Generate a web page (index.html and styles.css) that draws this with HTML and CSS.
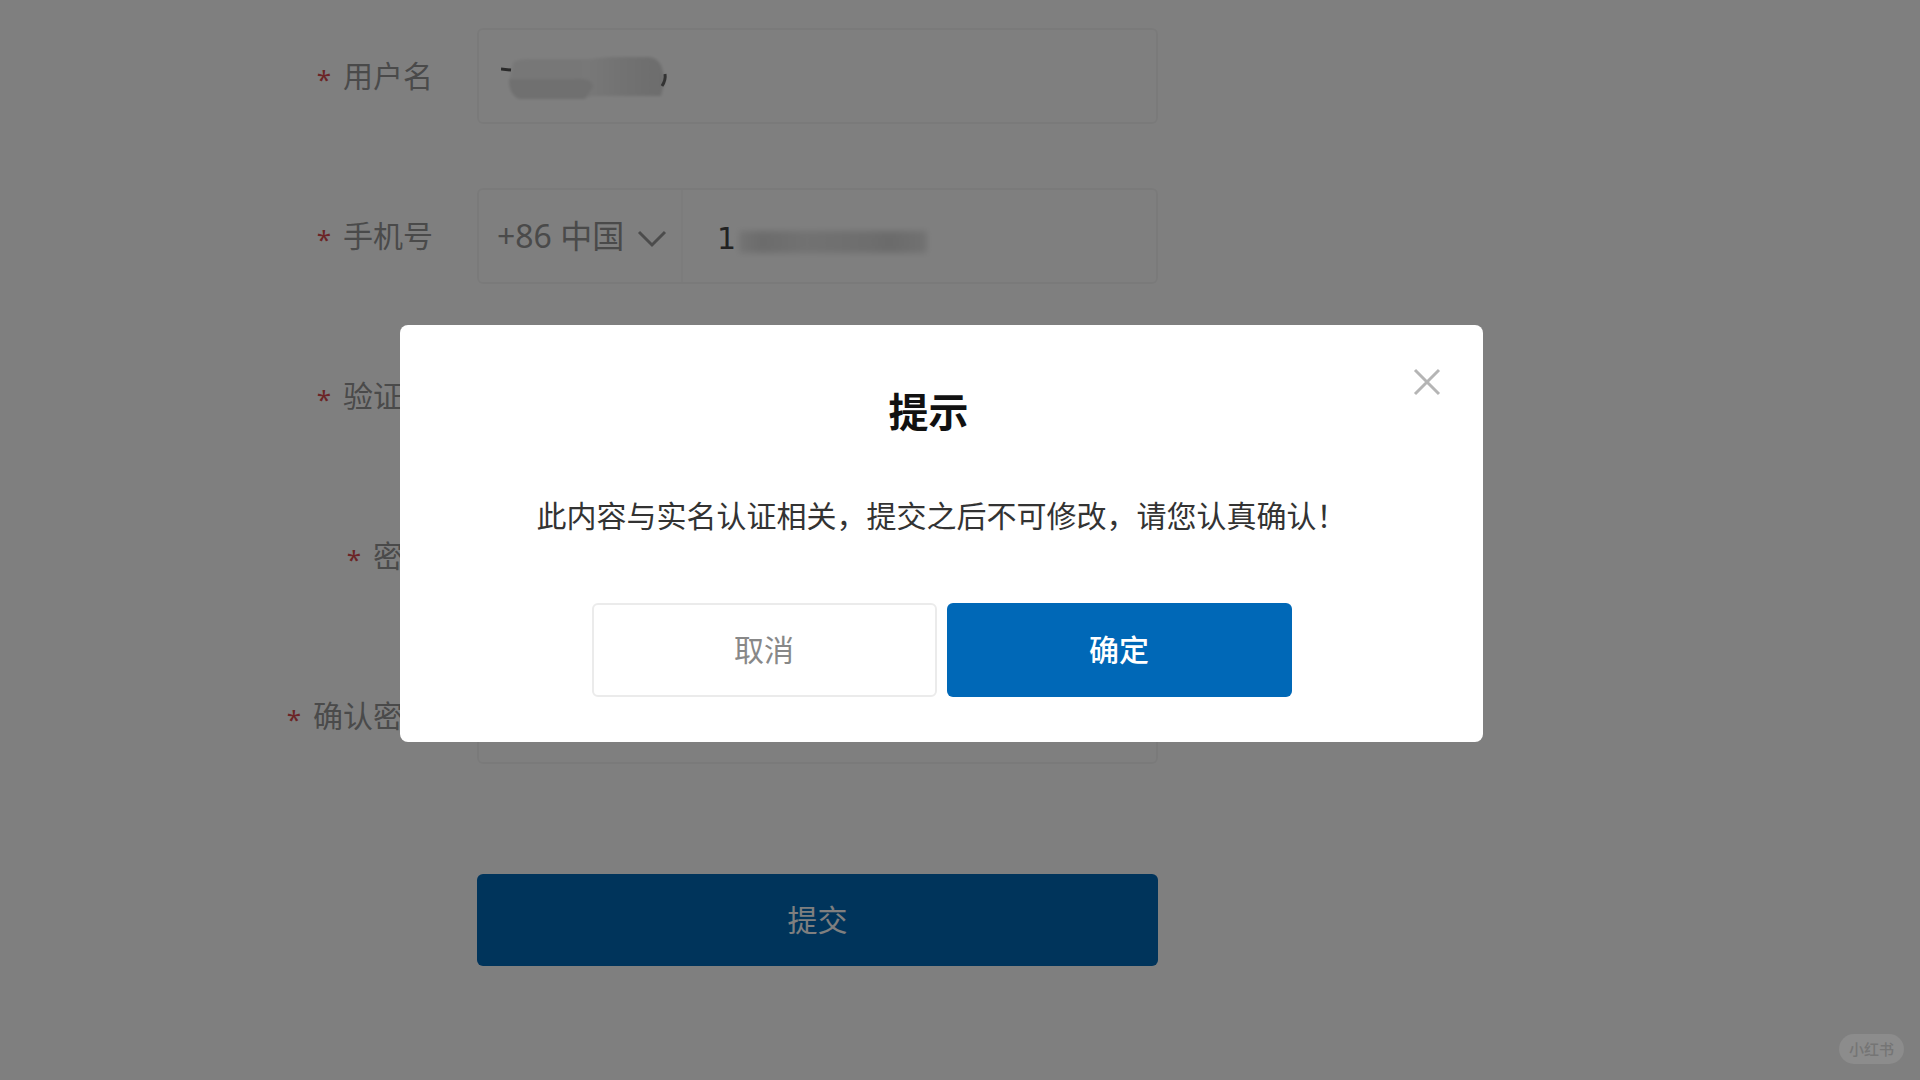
FILE: index.html
```html
<!DOCTYPE html>
<html lang="zh-CN">
<head>
  <meta charset="UTF-8">
  <meta name="viewport" content="width=device-width, initial-scale=1.0">
  <title>提示</title>
  <link rel="stylesheet" href="styles.css">
</head>
<body>
  <form class="register-form">
    <div class="form-row">
      <label for="username"><span class="required">*</span>用户名</label>
      <div class="field">
        <input type="text" id="username" name="username">
        <!-- masked user name -->
        <svg class="mask mask-name" width="168" height="52" viewBox="0 0 168 52" aria-hidden="true">
          <defs>
            <linearGradient id="smudge" x1="0" x2="1">
              <stop offset="0" stop-color="#f2f2f2"/>
              <stop offset="0.5" stop-color="#e4e4e4"/>
              <stop offset="1" stop-color="#dadada"/>
            </linearGradient>
            <filter id="soft">
              <feGaussianBlur stdDeviation="1.5"/>
            </filter>
          </defs>
          <g filter="url(#soft)">
            <path d="M12 10Q16 6 26 6H90V44H18Q8 40 8 30Z" fill="#efefef"/>
            <path d="M82 8Q90 5 110 4H148Q158 5 161 15L164 27 160 43H82Z" fill="url(#smudge)"/>
            <path d="M8 26H72Q92 24 92 34L84 46H18Q8 42 8 26Z" fill="#e0e0e0"/>
          </g>
          <path d="M0 16L10 17" fill="none" stroke="#555" stroke-width="3"/>
          <path d="M164 21Q165 27 161 33" fill="none" stroke="#666" stroke-width="3"/>
        </svg>
      </div>
    </div>
    <div class="form-row">
      <label for="phone"><span class="required">*</span>手机号</label>
      <div class="field">
        <select id="area-code" name="area" aria-label="国家/地区">
          <option>+86 中国</option>
        </select>
        <svg class="chevron" width="30" height="18" viewBox="0 0 30 18" aria-hidden="true">
          <path d="M2 2L15 15 28 2" fill="none" stroke="#999" stroke-width="3"/>
        </svg>
        <input type="tel" id="phone" name="phone" value="1">
        <span class="mask mask-phone"></span>
      </div>
    </div>
    <div class="form-row">
      <label for="code"><span class="required">*</span>验证码</label>
      <div class="field">
        <input type="text" id="code" name="code">
      </div>
    </div>
    <div class="form-row">
      <label for="password"><span class="required">*</span>密码</label>
      <div class="field">
        <input type="password" id="password" name="password">
      </div>
    </div>
    <div class="form-row">
      <label for="confirm"><span class="required">*</span>确认密码</label>
      <div class="field">
        <input type="password" id="confirm" name="confirm">
      </div>
    </div>
    <div class="form-row submit-row">
      <button type="submit" class="btn btn-primary">提交</button>
    </div>
  </form>

  <div class="overlay">
    <div class="dialog" role="dialog" aria-modal="true" aria-labelledby="dialog-title">
      <button type="button" class="close" aria-label="关闭">
        <svg width="28" height="28" viewBox="0 0 28 28">
          <path d="M2 2L26 26M26 2L2 26" fill="none" stroke="#b5b5b5" stroke-width="3"/>
        </svg>
      </button>
      <h2 id="dialog-title">提示</h2>
      <p>此内容与实名认证相关，提交之后不可修改，请您认真确认！</p>
      <div class="actions">
        <button type="button" class="btn btn-default">取消</button>
        <button type="button" class="btn btn-primary">确定</button>
      </div>
    </div>
  </div>

  <span class="badge">小红书</span>
</body>
</html>
```
FILE: styles.css
```css
* {
  box-sizing: border-box;
}
body {
  margin: 0;
  background-color: #fff;
  color: #333;
  font-family: "Noto Sans", "Noto Sans CJK SC", sans-serif;
  font-size: 30px;
  line-height: 40px;
}
input, select, button {
  font: inherit;
  color: inherit;
}

/* form */
.register-form {
  display: flex;
  flex-direction: column;
  gap: 64px;
  padding: 28px 24px 24px 0;
}
.form-row {
  display: grid;
  grid-template-columns: 433px minmax(0, 681px);
  column-gap: 44px;
  align-items: center;
}
.form-row label {
  display: flex;
  justify-content: flex-end;
  align-items: center;
  gap: 12px;
  color: #949494;
}
.required {
  padding-top: 6px;
  color: #d8484c;
  font-size: 26px;
}
.field {
  position: relative;
  display: flex;
  align-items: center;
  height: 96px;
  border: 2px solid #f5f5f5;
  border-radius: 6px;
}
.field input {
  flex: 1;
  min-width: 0;
  height: 100%;
  padding: 0 20px;
  border: none;
  outline: none;
  background: none;
}
.field select {
  width: 204px;
  height: 100%;
  padding: 0 18px;
  border: none;
  border-right: 2px solid #f9f9f9;
  appearance: none;
  background: none;
  color: #949494;
  font-size: 32px;
}
.field input[type="tel"] {
  padding: 4px 34px 0;
  color: #444;
  font-family: "DejaVu Sans", sans-serif;
}
.chevron {
  position: absolute;
  left: 158px;
  top: 40px;
}
.mask {
  position: absolute;
}
.mask-name {
  left: 22px;
  top: 23px;
}
.mask-phone {
  left: 260px;
  top: 41px;
  width: 188px;
  height: 22px;
  background: linear-gradient(90deg, #e8e8e8, #d8d8d8 12%, #e4e4e4 35%, #dcdcdc 70%, #d6d6d6 80%, #e4e4e4);
  filter: blur(3px);
}
.submit-row {
  margin-top: 46px;
}
.submit-row .btn {
  grid-column: 2;
}

/* buttons */
.btn {
  height: 92px;
  border: none;
  border-radius: 6px;
  cursor: pointer;
}
.btn-primary {
  background-color: #0068b7;
  color: #fff;
}
.btn-default {
  border: 2px solid #ebebeb;
  background-color: #fff;
  color: #888;
}

/* dialog */
.overlay {
  position: fixed;
  inset: 0;
  display: flex;
  justify-content: center;
  align-items: center;
  padding: 0 37px 14px 0;
  background-color: rgba(0, 0, 0, 0.5);
}
.dialog {
  position: relative;
  width: 100%;
  max-width: 1083px;
  padding: 57px 40px 45px;
  border-radius: 8px;
  background-color: #fff;
  text-align: center;
}
.dialog h2 {
  margin: 0 26px 54px 0;
  color: #111;
  font-size: 40px;
  font-weight: bold;
  line-height: 60px;
}
.dialog p {
  margin: 0 0 67px;
}
.close {
  position: absolute;
  top: 43px;
  right: 42px;
  display: flex;
  padding: 0;
  border: none;
  background: none;
  cursor: pointer;
}
.actions {
  display: flex;
  justify-content: center;
  gap: 10px;
}
.actions .btn {
  flex: 0 1 345px;
  height: 94px;
}
.actions .btn-primary {
  font-weight: 500;
}

.badge {
  position: fixed;
  right: 16px;
  bottom: 16px;
  padding: 0 10px;
  border-radius: 15px;
  background-color: #8c8c8c;
  color: #757575;
  font-size: 15px;
  font-weight: 500;
  line-height: 30px;
}
```
